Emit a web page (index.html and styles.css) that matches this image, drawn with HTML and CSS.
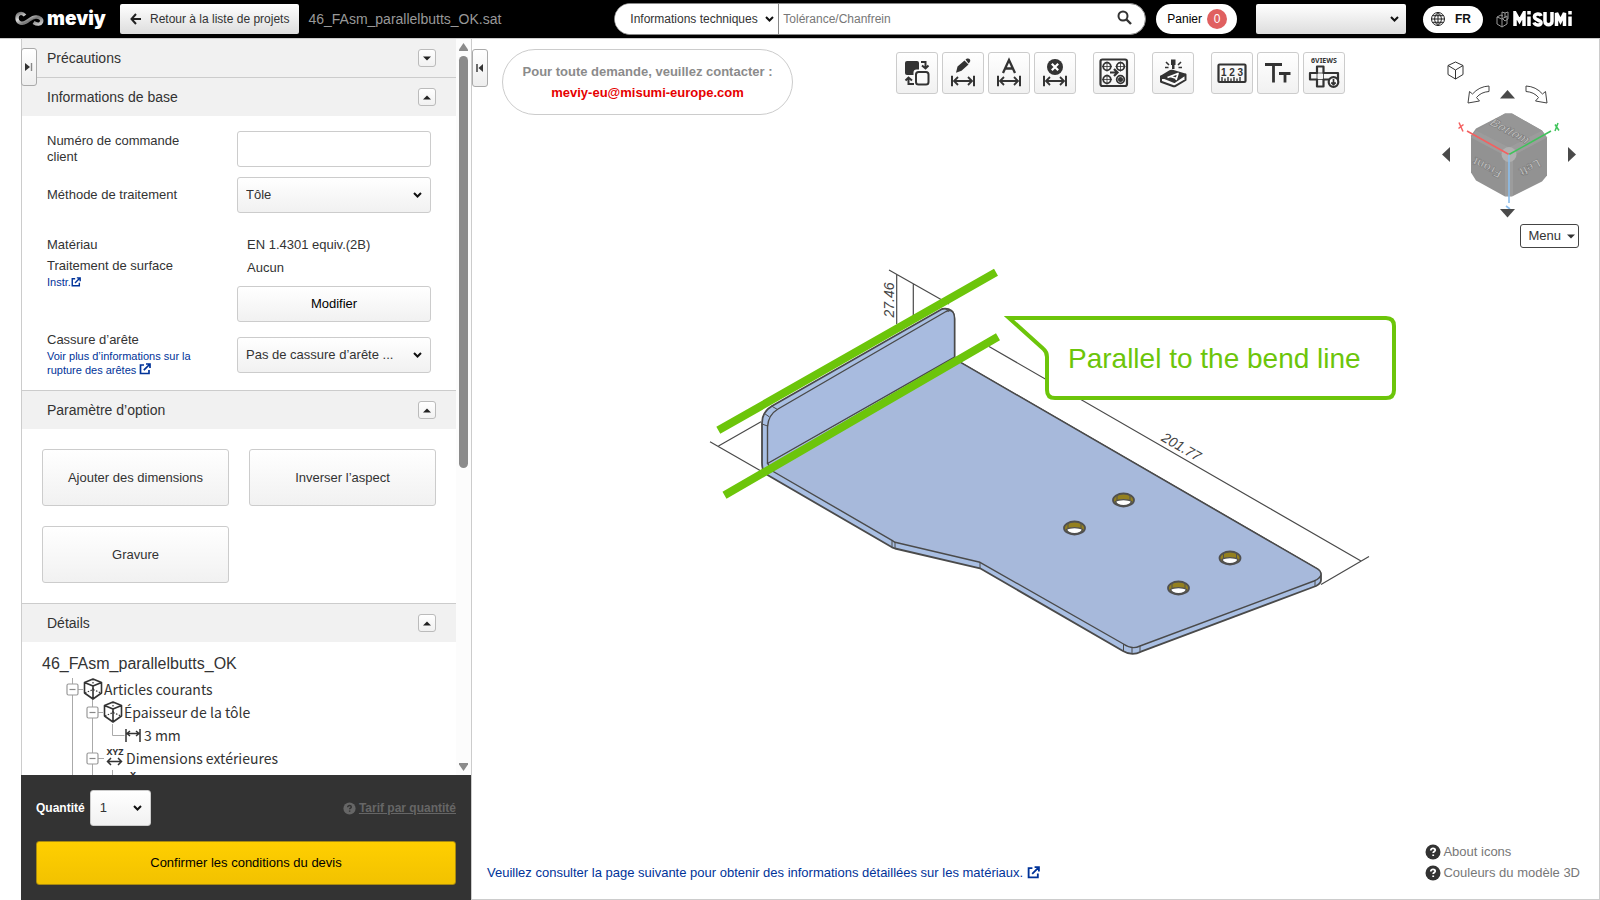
FILE: index.html
```html
<!DOCTYPE html>
<html lang="fr">
<head>
<meta charset="utf-8">
<title>meviy</title>
<link rel="stylesheet" href="styles.css">
</head>
<body>
<svg class="defs" width="0" height="0" aria-hidden="true">
  <defs>
    <linearGradient id="metal" x1="0" y1="0" x2="1" y2="1">
      <stop offset="0" stop-color="#777"/><stop offset=".3" stop-color="#ddd"/><stop offset=".6" stop-color="#777"/><stop offset="1" stop-color="#ccc"/>
    </linearGradient>
    <symbol id="i-ext" viewBox="0 0 12 12"><path d="M5 2H1.500v8.500h8.500V7M7 1h4v4M11 1 4.800 7.200" fill="none" stroke="currentColor" stroke-width="1.700"/></symbol>
    <symbol id="i-up" viewBox="0 0 8 5"><path d="M0 4.500 4 .5l4 4z" fill="currentColor"/></symbol>
    <symbol id="i-down" viewBox="0 0 8 5"><path d="M0 .5h8l-4 4z" fill="currentColor"/></symbol>
    <symbol id="i-cube" viewBox="0 0 20 22"><path d="M10 1 18.500 4.500V15L10 21 1.500 15V4.500zM1.500 4.500 10 8l8.500-3.500M10 8v13" fill="none" stroke="#333" stroke-width="1.600" stroke-linejoin="round"/><path d="M10 1v12M2 15l8-3.500 8 3.500" fill="none" stroke="#333" stroke-width="1.200" stroke-dasharray="1.500 1.500"/></symbol>
    <symbol id="i-minus" viewBox="0 0 13 13"><rect x="1" y="1" width="11" height="11" rx="1.500" fill="#fff" stroke="#999" stroke-width="1.200"/><path d="M3.500 6.500h6" stroke="#888" stroke-width="1.200"/></symbol>
    <symbol id="i-dim" viewBox="0 0 24 11"><path d="M1 0v11M23 0v11" stroke="#333" stroke-width="2"/><path d="M3 5.500h18M7 1.500l-4 4 4 4M17 1.500l4 4-4 4" fill="none" stroke="#333" stroke-width="1.800"/></symbol>
    <symbol id="i-help" viewBox="0 0 16 16"><circle cx="8" cy="8" r="7.500" fill="currentColor"/><path d="M5.800 6.400c0-1.300 1-2 2.200-2s2.200.7 2.200 1.800c0 1.400-2 1.400-2 2.800M8.200 10.400v1.700" fill="none" stroke="var(--mark)" stroke-width="1.800"/></symbol>
    <g id="hole">
      <ellipse rx="10.500" ry="6.500" fill="#94801f" stroke="#505050" stroke-width="1.800"/>
      <path d="M-8 1.500C-5-1 5-1 8 1.500 7 4 4 5.600 0 5.600S-7 4-8 1.500z" fill="#fff" stroke="#505050" stroke-width="1.200"/>
      <path d="M-6.500-5V0M6.500-5V0" stroke="#505050"/>
    </g>
  </defs>
</svg>

<header class="topbar">
  <a class="brand" href="#" aria-label="meviy">
    <svg width="31" height="18" viewBox="0 0 31 18"><path d="M11 5.500C8 2 3 3 3 8S8 14.500 12 12 18 7 22 7s6.500 2.500 5.500 5-4 3-8 .5" fill="none" stroke="url(#metal)" stroke-width="3.400"/></svg>
    <span>meviy</span>
  </a>
  <button class="back" type="button">
    <svg width="12" height="12" viewBox="0 0 12 12"><path d="M6 1 1.500 6 6 11M1.500 6H11" fill="none" stroke="#222" stroke-width="2"/></svg>
    Retour à la liste de projets
  </button>
  <span class="filename">46_FAsm_parallelbutts_OK.sat</span>
  <form class="search">
    <select class="search-kind" aria-label="Type de recherche"><option>Informations techniques</option></select>
    <input class="search-text" type="text" placeholder="Tolérance/Chanfrein" aria-label="Recherche">
    <button class="search-go" type="button" aria-label="Rechercher">
      <svg width="15" height="15" viewBox="0 0 15 15"><circle cx="6" cy="6" r="4.500" fill="none" stroke="#333" stroke-width="2"/><path d="m9.500 9.500 4.500 4.500" stroke="#333" stroke-width="2.400"/></svg>
    </button>
  </form>
  <a class="cart" href="#">Panier <span class="count">0</span></a>
  <select class="account" aria-label="Compte"><option></option></select>
  <button class="lang" type="button">
    <svg width="14" height="14" viewBox="0 0 14 14"><path d="M7 .5a6.500 6.500 0 1 0 0 13 6.500 6.500 0 0 0 0-13zM7 .5v13M.5 7h13M1.500 3.700h11M1.500 10.300h11M7 .5C2.500 4 2.500 10 7 13.500 11.500 10 11.500 4 7 .5" fill="none" stroke="#222"/></svg>
    FR
  </button>
  <a class="misumi" href="#" aria-label="MiSUMi">
    <svg width="14" height="17" viewBox="0 0 14 17"><path d="M1 6l5 2v8l-5-3zM6 8l5-3v8l-5 3M1 6l4-2 2 1M6 1l3 1v5M6 1v6l3 3M9 2l3-1v7l-3 2" fill="none" stroke="#999"/></svg>
    <svg width="59" height="16" viewBox="0 0 59 16" fill="none" stroke="#fff" stroke-width="3.500"><path d="M2 15V2l4.500 8L11 2v13M16 5.500V15M16 0v3.500M28 5c-1-3-6-2.500-6.500.5-.5 4 7 3 6.500 6.500-.5 3-6 2.500-7-.5M32 1v9.500c0 4.200 7 4.200 7 0V1M43.500 15V2l4 8 4-8v13M57 5.500V15M57 0v3.500"/></svg>
  </a>
</header>

<div class="workspace">
  <aside class="sidebar">
    <button class="tab tab-left" type="button" aria-label="Réduire le panneau"><svg width="8" height="8" viewBox="0 0 8 8"><path d="M0 0l5 4-5 4z" fill="#333"/><path d="M6.500 0v8" stroke="#888" stroke-width="1.400"/></svg></button>
    <div class="scroller">
      <div class="panels">
        <section class="panel">
          <h2 class="panel-head">Précautions <button class="toggle" type="button" aria-label="Ouvrir"><svg width="8" height="5"><use href="#i-down"/></svg></button></h2>
        </section>
        <section class="panel">
          <h2 class="panel-head">Informations de base <button class="toggle" type="button" aria-label="Fermer"><svg width="8" height="5"><use href="#i-up"/></svg></button></h2>
          <div class="form">
            <label class="name" for="order">Numéro de commande client</label>
            <input class="field" id="order" type="text">
            <label class="name" for="method">Méthode de traitement</label>
            <select class="field" id="method"><option>Tôle</option></select>
            <div class="name material">
              <div class="line">Matériau</div>
              <div>Traitement de surface</div>
              <a class="small" href="#">Instr.<svg width="10" height="10"><use href="#i-ext"/></svg></a>
            </div>
            <div class="material">
              <div class="value">EN 1.4301 equiv.(2B)</div>
              <div class="value">Aucun</div>
              <button class="field modify" type="button">Modifier</button>
            </div>
            <div class="name edge">
              <label for="edge">Cassure d’arête</label>
              <a class="small" href="#">Voir plus d’informations sur la rupture des arêtes <svg width="12" height="12"><use href="#i-ext"/></svg></a>
            </div>
            <select class="field" id="edge"><option>Pas de cassure d’arête ...</option></select>
          </div>
        </section>
        <section class="panel">
          <h2 class="panel-head">Paramètre d’option <button class="toggle" type="button" aria-label="Fermer"><svg width="8" height="5"><use href="#i-up"/></svg></button></h2>
          <div class="options">
            <button class="option" type="button">Ajouter des dimensions</button>
            <button class="option" type="button">Inverser l’aspect</button>
            <button class="option" type="button">Gravure</button>
          </div>
        </section>
        <section class="panel">
          <h2 class="panel-head">Détails <button class="toggle" type="button" aria-label="Fermer"><svg width="8" height="5"><use href="#i-up"/></svg></button></h2>
          <div class="tree">
            <h3 class="tree-title">46_FAsm_parallelbutts_OK</h3>
            <ul class="rows">
              <li class="row"><svg width="42" height="23"><path d="M10.500 0v23M10 11.500h11" stroke="#aaa" fill="none"/><path d="M30.500 21v2" stroke="#aaa"/><use href="#i-minus" x="4" y="5" width="13" height="13"/><use href="#i-cube" x="21" y="0" width="20" height="22"/></svg>Articles courants</li>
              <li class="row"><svg width="62" height="23"><path d="M10.500 0v23M30.500 0v23M30 11.500h11" stroke="#aaa" fill="none"/><use href="#i-minus" x="24" y="5" width="13" height="13"/><use href="#i-cube" x="41" y="0" width="20" height="22"/></svg>Épaisseur de la tôle</li>
              <li class="row"><svg width="82" height="23"><path d="M10.500 0v23M30.500 0v23M50.500 0v11.500h12" stroke="#aaa" fill="none"/><path d="M64 5v13M78 5v13M65 9.500h12M68 7l-3 2.500 3 2.500M74 7l3 2.500-3 2.500" stroke="#333" stroke-width="1.500" fill="none"/></svg>3 mm</li>
              <li class="row"><svg width="64" height="23"><path d="M10.500 0v23M30.500 0v23M30 11.500h12" stroke="#aaa" fill="none"/><use href="#i-minus" x="24" y="5" width="13" height="13"/><text class="xyz" x="53" y="8">XYZ</text><path d="M45 14.500h15M49 11l-3.500 3.500L49 18M56 11l3.500 3.500L56 18" stroke="#333" stroke-width="1.500" fill="none"/></svg>Dimensions extérieures</li>
              <li class="row"><svg width="82" height="23"><path d="M10.500 0v23M30.500 0v23M50.500 0v23" stroke="#aaa" fill="none"/><text class="xyz" x="71" y="8">X</text></svg></li>
            </ul>
          </div>
        </section>
      </div>
      <div class="bar" aria-hidden="true">
        <svg width="9" height="8" viewBox="0 0 9 8"><path d="M4.500 0 9 6.500V8H0V6.500z" fill="#8b8b8b"/></svg>
        <div class="thumb"></div>
        <svg width="9" height="8" viewBox="0 0 9 8"><path d="M4.500 8 9 1.500V0H0v1.500z" fill="#8b8b8b"/></svg>
      </div>
    </div>
    <footer class="quote">
      <div class="quantity">
        <label for="qty">Quantité</label>
        <select class="field qty" id="qty"><option>1</option></select>
        <a class="price" href="#"><svg width="13" height="13"><use href="#i-help"/></svg> <span>Tarif par quantité</span></a>
      </div>
      <button class="confirm" type="button">Confirmer les conditions du devis</button>
    </footer>
  </aside>

  <main class="viewer">
    <svg class="scene" viewBox="472 39 1127 860" preserveAspectRatio="xMinYMin meet">
      <g fill="none" stroke="#4a4a4a" stroke-width="1.200">
        <path d="M710 441.700 761 471M718.500 446 761 421.700M889 270l60 34M896.700 274v50M913.300 284.300v33M989 346.500 1361 561M1369 556.500l-48 28"/>
      </g>
      <text class="dim" text-anchor="middle" transform="translate(893.500 300) rotate(-90)">27.46</text>
      <text class="dim" text-anchor="middle" transform="translate(1179 451) rotate(30)">201.77</text>
      <g stroke="#4a4a4a" stroke-width="1.800" stroke-linejoin="round">
        <path fill="#a9bfe3" d="M942 309 772 406Q762 412 762 423V463Q762 472 767.500 475L892 547.300 895 548.500 980 568.300 1123 651Q1132 656.500 1141 651.700L1316 586Q1321 583.500 1321 580V576Q1321 571.500 1317.500 569L958 361 954.500 357V319Q954 307 942 309z"/>
        <path fill="#a7b9db" stroke-width="1.400" d="M771.500 470.500 892 540.300 895 542.300 980 562.300 1123.500 644Q1132 650 1140 646L1314 581Q1321 578 1321 574 1321 571 1317.500 569L958 361 954.500 357 767.500 463z"/>
        <path fill="#a8bbdf" stroke-width="1.400" d="M767.500 463.500V427Q768 415 778 409L946 311.500Q954.500 308 954.500 319V357z"/>
        <path fill="none" stroke-width="1" d="M764.500 413.500l5 3.500M771.500 406l6 3.500M762 424l5.500 2M945 308.500l4 3M892 540.300v7M895 542.300v6M980 562.300v6M1123.500 644v7M1132 647v7M1140 646v6M1315 580.700v6"/>
      </g>
      <use href="#hole" x="1123.500" y="500"/><use href="#hole" x="1074.500" y="528"/><use href="#hole" x="1230" y="558"/><use href="#hole" x="1178.500" y="588"/>
      <path d="M718.300 430.300 996 272.300M724.500 495.300 998 336.700" stroke="#6cc50a" stroke-width="8"/>
      <path d="M1009 318H1386Q1394 318 1394 326V390Q1394 398 1386 398H1055Q1047 398 1047 390V357Q1047 352 1043.500 349z" fill="#fff" stroke="#6cc50a" stroke-width="4" stroke-miterlimit="8"/>
      <text class="callout" x="1068" y="368">Parallel to the bend line</text>
    </svg>

    <div class="overlay-top">
      <button class="tab tab-right" type="button" aria-label="Réduire"><svg width="8" height="8" viewBox="0 0 8 8"><path d="M7 0 2.500 4 7 8z" fill="#333"/><path d="M1 0v8" stroke="#333" stroke-width="1.400"/></svg></button>
      <div class="contact">
        <span>Pour toute demande, veuillez contacter :</span>
        <a href="mailto:meviy-eu@misumi-europe.com">meviy-eu@misumi-europe.com</a>
      </div>
      <div class="toolbar">
        <div class="group">
          <button class="tool" type="button" aria-label="Changer de face"><svg viewBox="1 1 40 40"><rect x="9" y="9" width="14" height="14" rx="2" fill="#333"/><rect x="17.500" y="17.500" width="17" height="17" rx="3" fill="#fafafa"/><rect x="20" y="20" width="12.500" height="12.500" rx="2.500" fill="none" stroke="#333" stroke-width="2"/><path d="M25 10h4.500v6M26 13.500l3.500 3 3-3M18 32h-5.500v-6M9.500 28.500l3-3 3.500 3" fill="none" stroke="#333" stroke-width="2"/></svg></button>
          <button class="tool" type="button" aria-label="Modifier la cote"><svg viewBox="1 1 40 40"><path d="M14 20.800l1.500-6.300L22.500 8.500l4 4-7 6.300zM23.500 7.500 25 6.500q2-.5 3 1 .8 1.600-.3 2.700l-1.200 1.200z" fill="#333"/><use href="#i-dim" x="9" y="23.500" width="24" height="11"/></svg></button>
          <button class="tool" type="button" aria-label="Annotation"><svg viewBox="1 1 40 40"><path d="M15 21l6-13 6 13M17 16.500h8" fill="none" stroke="#333" stroke-width="2.300"/><use href="#i-dim" x="9" y="23.500" width="24" height="11"/></svg></button>
          <button class="tool" type="button" aria-label="Supprimer la cote"><svg viewBox="1 1 40 40"><circle cx="21" cy="15" r="8" fill="#333"/><path d="M17.800 11.800l6.400 6.400M24.200 11.800l-6.400 6.400" stroke="#fff" stroke-width="2.200"/><use href="#i-dim" x="9" y="23.500" width="24" height="11"/></svg></button>
        </div>
        <button class="tool" type="button" aria-label="Trous"><svg viewBox="1 1 40 40" fill="none" stroke="#333" stroke-width="1.800"><rect x="7.500" y="7.500" width="26.500" height="26.500" rx="2" stroke-width="2.200"/><circle cx="14" cy="14.500" r="3.800"/><circle cx="27.500" cy="14.500" r="3.800"/><circle cx="14" cy="27.500" r="3.800"/><circle cx="27.500" cy="27.500" r="3.800"/><circle cx="27.500" cy="27.500" r="1.600" fill="#333"/><path d="M9 14.500h10M14 9.500v10M22.500 14.500h10M27.500 9.500v10M9 27.500h10M14 22.500v10" stroke-width=".8"/><path d="M17 20.500h7M21 17l3.500 3.500L21 24" stroke-width="2.200"/></svg></button>
        <button class="tool" type="button" aria-label="Gravure"><svg viewBox="1 1 40 40" fill="none" stroke="#333" stroke-width="2" stroke-linejoin="round"><path d="M9 24.500 18 19q1-.6 2.500-.2L33 22.500 22.500 30z" fill="#333"/><path d="M9 24.500v5.200L21.500 34.300q1 .2 2-.4L33.500 28v-5.500L22.500 30z" fill="#fafafa"/><path d="M15.500 25.500l10.500-4-2 6.500M18.500 24.500l5.500 1.800" stroke="#fff" stroke-width="1.700"/><path d="M19 7.500h4.500v5.500h-1v4h-2.500v-4h-1z" fill="#333" stroke="none"/><path d="M14 10l3 3M29 10l-3 3M13 15.500h3.500M30 15.500h-3.500" stroke-width="1.600"/></svg></button>
        <div class="group">
          <button class="tool" type="button" aria-label="Cotes"><svg viewBox="1 1 40 40"><rect x="7.500" y="12.500" width="27" height="17.500" rx="1" fill="none" stroke="#333" stroke-width="2.200"/><text class="digits" x="21" y="23.500">1 2 3</text><path d="M11 29v-4M14 29v-2.500M17 29v-4M20 29v-2.500M23 29v-4M26 29v-2.500M29 29v-4" stroke="#333" stroke-width="1.400"/></svg></button>
          <button class="tool" type="button" aria-label="Taille du texte"><svg viewBox="1 1 40 40"><path d="M8 12.500h17M16.500 12v18.500M22 21.500h11.500M28 21v9.500" fill="none" stroke="#333" stroke-width="2.800"/></svg></button>
          <button class="tool" type="button" aria-label="6 vues"><svg viewBox="1 1 40 40" fill="none" stroke="#333"><text class="views" x="21" y="10.500">6VIEWS</text><path d="M14 14.500h6.500V21H35v6.500H20.500v7H14v-7H7V21h7z" stroke-width="2.200" stroke-linejoin="round"/><path d="M14 21h6.500v6.500H14z" stroke-width=".8"/><circle cx="30.500" cy="30" r="4.800" fill="#fff" stroke-width="2.200"/><path d="M30.500 27v5M28.300 30.500l2.200 2 2.200-2" stroke-width="1.700"/></svg></button>
        </div>
      </div>
      <nav class="view-nav">
        <button class="bare home" type="button" aria-label="Vue initiale"><svg width="17" height="19" viewBox="0 0 17 19"><path d="M8.500 1 16 4.500v9L8.500 18 1 13.500v-9zM1 4.500 8.500 9 16 4.500M8.500 9v9" fill="none" stroke="#333" stroke-linejoin="round"/></svg></button>
        <div class="turns">
          <button class="bare" type="button" aria-label="Tourner à gauche"><svg width="23" height="19" viewBox="0 0 23 19"><path d="M22 1v5.500Q14 7 9.500 12.500l3 3.500L1 18 2.500 6.500 5.500 9Q12 1.500 22 1z" fill="#fff" stroke="#444"/></svg></button>
          <button class="bare" type="button" aria-label="Haut"><svg width="15" height="9"><path d="M7.500 0 15 8.500H0z" fill="#4a4a4a"/></svg></button>
          <button class="bare" type="button" aria-label="Tourner à droite"><svg width="23" height="19" viewBox="0 0 23 19"><path d="M1 1v5.500Q9 7 13.500 12.500l-3 3.500L22 18 20.500 6.500 17.500 9Q11 1.500 1 1z" fill="#fff" stroke="#444"/></svg></button>
        </div>
        <div class="cube-row">
          <button class="bare" type="button" aria-label="Gauche"><svg width="8" height="15"><path d="M8 0v15L0 7.500z" fill="#4a4a4a"/></svg></button>
          <svg class="cube" width="102" height="94" viewBox="1458 108 102 94">
            <path d="M1505 114.500h7l30 17 5 7v38l-5 6-30 15h-7l-29-16-5-8v-37l5-7z" fill="#929292"/>
            <path d="M1505 114.500h7l30 17-29 17h-9l-28-17z" fill="#969696"/>
            <path d="M1476 131.500l-5 7 30 16 8-6zM1542 131.500l5 7-30 16-8-6zM1505 155h8v42h-8z" fill="#9c9c9c"/>
            <circle cx="1509" cy="155.500" r="7.500" fill="#b0b0b0"/>
            <text class="face" transform="translate(1507 135) rotate(28) skewX(-20)">Bottom</text>
            <text class="face" transform="translate(1489 165) rotate(208)">Front</text>
            <text class="face" transform="translate(1528 165) rotate(152)">Left</text>
            <path d="M1509 155.500 1467 132" stroke="#f46060" stroke-width="1.500"/><path d="M1509 155.500 1551 132" stroke="#3fc35a" stroke-width="1.500"/><path d="M1509 155.500V204M1506 207l4 3" stroke="#8bbdec" stroke-width="1.600"/>
            <path d="M1459 123.500l4 9M1463.500 125.500l-5 4" stroke="#f46060" stroke-width="1.500"/><path d="M1555 132l3-8M1555 125.500l4 6" stroke="#3fc35a" stroke-width="1.500"/>
          </svg>
          <button class="bare" type="button" aria-label="Droite"><svg width="8" height="15"><path d="M0 0v15l8-7.500z" fill="#4a4a4a"/></svg></button>
        </div>
        <button class="bare below" type="button" aria-label="Bas"><svg width="15" height="9"><path d="M0 0h15L7.500 8.500z" fill="#4a4a4a"/></svg></button>
        <button class="menu" type="button">Menu <svg width="8" height="5"><use href="#i-down"/></svg></button>
      </nav>
    </div>

    <div class="overlay-bottom">
      <a class="materials" href="#">Veuillez consulter la page suivante pour obtenir des informations détaillées sur les matériaux. <svg width="13" height="13"><use href="#i-ext"/></svg></a>
      <div class="help">
        <a href="#"><svg width="16" height="16"><use href="#i-help"/></svg>About icons</a>
        <a href="#"><svg width="16" height="16"><use href="#i-help"/></svg>Couleurs du modèle 3D</a>
      </div>
    </div>
  </main>
</div>
</body>
</html>
```
FILE: styles.css
```css
* { box-sizing: border-box; }
:root { --chevron: url("data:image/svg+xml,%3Csvg xmlns='http://www.w3.org/2000/svg' width='9' height='6'%3E%3Cpath d='M1 1l3.500 3.500L8 1' fill='none' stroke='%23111' stroke-width='2'/%3E%3C/svg%3E"); }
body {
  margin: 0;
  height: 100vh;
  display: flex;
  flex-direction: column;
  overflow: hidden;
  background: #fff;
  color: #333;
  font: 13px/16px "Liberation Sans", Arial, sans-serif;
}
button, input, select { font: inherit; color: inherit; margin: 0; }
button { cursor: pointer; padding: 0; }
select { appearance: none; }
a { text-decoration: none; color: #039; }
.defs { position: absolute; }
svg { flex: none; }

/* Top bar */
.topbar {
  height: 39px;
  flex: none;
  display: flex;
  align-items: center;
  padding: 0 28px 0 14px;
  background: #000;
  border-bottom: 1px solid #ccc;
}
.brand { display: flex; align-items: center; gap: 2px; width: 106px; color: #fff; font: 900 19px/24px Inter, "Liberation Sans", sans-serif; }
.back {
  display: flex; align-items: center; gap: 8px;
  height: 30px; padding: 0 10px;
  border: 0; border-radius: 2px;
  background: linear-gradient(#fff, #ddd);
  font-size: 12px;
}
.filename { margin-left: 9px; color: #999; font-size: 14px; }
.search {
  display: flex;
  width: 532px; height: 32px;
  margin-left: auto;
  border: 1px solid #888; border-radius: 16px;
  background: #fff;
  overflow: hidden;
  font-size: 12px;
}
.search-kind { width: 164px; padding: 0 15px; border: 0; border-right: 1px solid #888; background: #fff var(--chevron) no-repeat right 4px center; }
.search-text { flex: 1; min-width: 0; border: 0; padding: 0 4px; outline: 0; }
.search-text::placeholder { color: #777; }
.search-go { width: 42px; border: 0; background: none; }
.cart { display: flex; align-items: center; gap: 5px; height: 30px; margin-left: 10px; padding: 0 10px 0 11px; border-radius: 15px; background: #fff; color: #000; font-size: 12px; }
.count { width: 20px; height: 20px; border-radius: 10px; background: #e06060; color: #fff; text-align: center; line-height: 20px; }
.account { width: 150px; height: 30px; margin-left: 19px; border: 0; border-radius: 2px; background: var(--chevron) no-repeat right 7px center, linear-gradient(#fff, #ddd); }
.lang { display: flex; align-items: center; gap: 10px; height: 27px; margin-left: 17px; padding: 0 12px 0 8px; border: 0; border-radius: 14px; background: #fff; color: #111; font-weight: bold; font-size: 12px; }
.misumi { display: flex; align-items: center; gap: 3px; margin-left: 13px; }

.workspace { flex: 1; min-height: 0; display: flex; padding-left: 21px; }

/* Sidebar */
.sidebar { position: relative; width: 450px; flex: none; display: flex; flex-direction: column; border-left: 1px solid #ccc; }
.tab { width: 16px; height: 38px; border: 1px solid #aaa; border-radius: 3px; background: linear-gradient(#fff, #eee); }
.tab-left { position: absolute; left: -1px; top: 9px; }
.scroller { flex: 1; min-height: 0; display: flex; overflow: hidden; }
.panels { flex: 1; min-width: 0; overflow: hidden; }
.panel + .panel { border-top: 1px solid #ccc; }
.panel-head {
  display: flex; align-items: center; justify-content: space-between;
  height: 38px; margin: 0; padding: 0 20px 0 25px;
  background: #f1f1f1;
  font-size: 14px; font-weight: normal;
}
.toggle { display: flex; align-items: center; justify-content: center; width: 18px; height: 18px; border: 1px solid #bbb; border-radius: 3px; background: linear-gradient(#fff, #f1f1f1); color: #222; }
.form { display: grid; grid-template-columns: 1fr 194px; row-gap: 10px; padding: 15px 25px 13px; align-items: center; }
.name { max-width: 150px; }
.field { width: 194px; height: 36px; border: 1px solid #ccc; border-radius: 3px; background: #fff; padding: 0 8px; }
select.field { background: var(--chevron) no-repeat right 8px center, linear-gradient(#fff, #f1f1f1); }
.material { align-self: start; padding-top: 4px; }
.name.material { padding-top: 14px; }
.line { margin-bottom: 5px; }
.value { padding: 10px 10px 0; line-height: 16px; }
.value + .value { padding-top: 7px; }
.modify { display: block; margin-top: 10px; background: linear-gradient(#fff, #f1f1f1); color: #000; }
.small { display: block; font-size: 11px; line-height: 14px; }
.small svg { vertical-align: -1px; }
.name .small { margin-top: 1px; }
.edge label { display: block; }
.options { display: grid; grid-template-columns: 1fr 1fr; gap: 20px; padding: 20px; }
.option { height: 57px; border: 1px solid #ccc; border-radius: 3px; background: linear-gradient(#fff, #f1f1f1); }
.tree { padding: 12px 20px 0; }
.tree-title { margin: 0; font-size: 16px; font-weight: normal; line-height: 20px; }
.rows { list-style: none; margin: 4px 0 0 20px; padding: 0; }
.row { display: flex; height: 23px; font: 14px/23px "Noto Sans CJK JP", "Noto Sans", sans-serif; }
.xyz { font: bold 9px "Noto Sans", sans-serif; text-anchor: middle; fill: #333; }
.bar { width: 15px; display: flex; flex-direction: column; align-items: center; padding: 4px 0; background: #fcfcfc; }
.thumb { width: 9px; height: 412px; margin: 5px 0 auto; border-radius: 5px; background: #8b8b8b; }
.quote { margin-left: -1px; padding: 15px; background: #333; color: #fff; }
.quantity { display: flex; align-items: center; gap: 5px; margin-bottom: 15px; }
.quantity label { color: #fff; font-weight: bold; font-size: 12px; }
.qty { width: 61px; color: #333; padding: 0 9px; }
.price { display: flex; align-items: center; gap: 3px; margin-left: auto; color: #666; font-weight: bold; font-size: 12px; --mark: #333; }
.price span { text-decoration: underline; }
.confirm { display: block; width: 100%; height: 44px; border: 1px solid #a88a10; border-radius: 3px; background: linear-gradient(#ffcf00, #f2c200); color: #000; }

/* Viewer */
.viewer { position: relative; flex: 1; min-width: 0; display: flex; flex-direction: column; justify-content: space-between; border: 1px solid #ccc; border-top: 0; }
.scene { position: absolute; inset: 0; width: 100%; height: 100%; }
.dim { font: italic 14px "Liberation Sans", sans-serif; fill: #444; }
.callout { font: 28px "Liberation Sans", sans-serif; fill: #6cc50a; }
.overlay-top, .overlay-bottom { position: relative; display: flex; }
.overlay-top { align-items: flex-start; padding: 10px 20px 0 0; }
.contact {
  display: flex; flex-direction: column; justify-content: center; align-items: center; gap: 5px;
  width: 291px; height: 66px; margin-left: 14px;
  border: 1px solid #ccc; border-radius: 33px;
  color: #8b8b8b; font-weight: bold;
}
.contact a { color: #e60000; }
.toolbar { display: flex; gap: 17px; margin: 3px 94px 0 auto; }
.group { display: flex; gap: 4px; }
.tool { width: 42px; height: 42px; border: 1px solid #ccc; border-radius: 3px; background: linear-gradient(#fff, #f1f1f1); }
.tool svg { display: block; width: 40px; height: 40px; }
.digits { font: bold 10px "Liberation Sans", sans-serif; text-anchor: middle; fill: #333; }
.views { font: bold 7px "Noto Sans", sans-serif; text-anchor: middle; fill: #333; stroke: none; }
.view-nav { display: flex; flex-direction: column; width: 140px; padding-top: 12px; }
.bare { display: block; border: 0; background: none; }
.bare svg { display: block; }
.home { align-self: flex-start; margin-left: 8px; }
.turns { display: flex; justify-content: center; align-items: center; gap: 10px; margin-top: 5px; padding-right: 3px; }
.cube-row { display: flex; align-items: center; justify-content: space-between; padding: 0 3px; margin-top: 3px; }
.cube { overflow: visible; }
.face { font: bold 12px "Liberation Sans", sans-serif; text-anchor: middle; fill: #c4c4c4; stroke: #707070; stroke-width: .5px; }
.below { align-self: center; margin: 8px 3px 0 0; }
.menu { align-self: flex-end; display: flex; align-items: center; gap: 6px; height: 24px; margin-top: 6px; padding: 0 3px 0 7px; border: 1px solid #444; border-radius: 3px; background: #fff; }
.overlay-bottom { justify-content: space-between; align-items: flex-end; padding: 0 19px 18px 15px; }
.materials svg { vertical-align: -2px; }
.help { display: flex; flex-direction: column; gap: 5px; }
.help a { display: flex; gap: 2px; color: #777; }
.help svg { color: #333; --mark: #fff; }
```
